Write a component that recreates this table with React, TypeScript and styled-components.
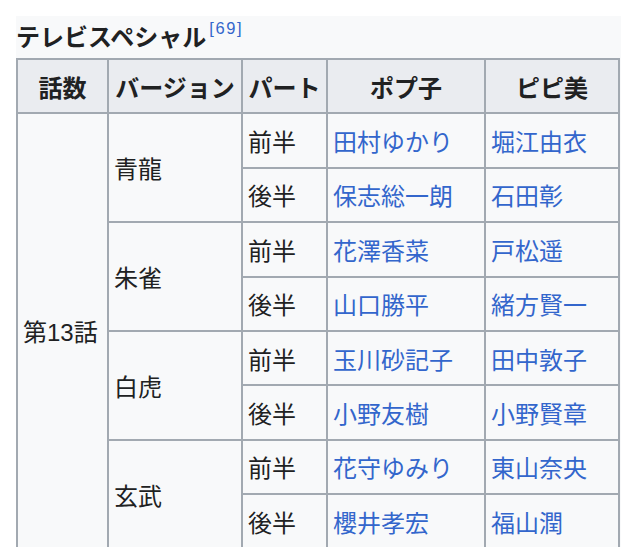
import React from "react";
import styled, { createGlobalStyle } from "styled-components";

const Global = createGlobalStyle`
  html, body { margin: 0; padding: 0; background: #ffffff; }
  body { font-family: "Liberation Sans", "Noto Sans CJK JP", sans-serif; color: #202122; }
`;

const Page = styled.div`
  padding: 16px 0 0 16px;
`;

const Frame = styled.div`
  width: 605px;
  background: #f8f9fa;
`;

const Caption = styled.div`
  height: 42px;
  font-size: 24px;
  font-weight: 700;
  line-height: 44px;
  color: #202122;
  white-space: nowrap;
`;

const Ref = styled.sup`
  font-size: 16.5px;
  font-weight: 400;
  color: #3366cc;
  line-height: 0;
  vertical-align: 12px;
  letter-spacing: 1.6px;
  margin-left: 3px;
`;

const Table = styled.table`
  border-collapse: collapse;
  table-layout: fixed;
  width: 602px;
  font-size: 24px;
`;

const Row = styled.tr`
  height: 54.4px;
`;

const HeadCell = styled.th`
  background: #eaecf0;
  border: 2px solid #a2a9b1;
  font-weight: 700;
  text-align: center;
  padding: 0 4px;
  white-space: nowrap;
`;

const Cell = styled.td<{ $link?: boolean }>`
  background: #f8f9fa;
  border: 2px solid #a2a9b1;
  padding: 0 5px;
  vertical-align: middle;
  white-space: nowrap;
  color: ${(p) => (p.$link ? "#3366cc" : "#202122")};
`;

type Part = { part: string; pop: string; pipi: string };
type Version = { name: string; parts: Part[] };

const versions: Version[] = [
  {
    name: "青龍",
    parts: [
      { part: "前半", pop: "田村ゆかり", pipi: "堀江由衣" },
      { part: "後半", pop: "保志総一朗", pipi: "石田彰" },
    ],
  },
  {
    name: "朱雀",
    parts: [
      { part: "前半", pop: "花澤香菜", pipi: "戸松遥" },
      { part: "後半", pop: "山口勝平", pipi: "緒方賢一" },
    ],
  },
  {
    name: "白虎",
    parts: [
      { part: "前半", pop: "玉川砂記子", pipi: "田中敦子" },
      { part: "後半", pop: "小野友樹", pipi: "小野賢章" },
    ],
  },
  {
    name: "玄武",
    parts: [
      { part: "前半", pop: "花守ゆみり", pipi: "東山奈央" },
      { part: "後半", pop: "櫻井孝宏", pipi: "福山潤" },
    ],
  },
];

export default function App() {
  const total = versions.reduce((n, v) => n + v.parts.length, 0);
  return (
    <>
      <Global />
      <Page>
        <Frame>
          <Caption>
            テレビスペシャル<Ref>[69]</Ref>
          </Caption>
          <Table>
            <colgroup>
              <col style={{ width: 91 }} />
              <col style={{ width: 134 }} />
              <col style={{ width: 85 }} />
              <col style={{ width: 158 }} />
              <col style={{ width: 134 }} />
            </colgroup>
            <thead>
              <Row>
                <HeadCell>話数</HeadCell>
                <HeadCell>バージョン</HeadCell>
                <HeadCell>パート</HeadCell>
                <HeadCell>ポプ子</HeadCell>
                <HeadCell>ピピ美</HeadCell>
              </Row>
            </thead>
            <tbody>
              {versions.map((v, vi) =>
                v.parts.map((p, pi) => (
                  <Row key={`${vi}-${pi}`}>
                    {vi === 0 && pi === 0 && <Cell rowSpan={total}>第13話</Cell>}
                    {pi === 0 && <Cell rowSpan={v.parts.length}>{v.name}</Cell>}
                    <Cell>{p.part}</Cell>
                    <Cell $link>{p.pop}</Cell>
                    <Cell $link>{p.pipi}</Cell>
                  </Row>
                ))
              )}
            </tbody>
          </Table>
        </Frame>
      </Page>
    </>
  );
}
